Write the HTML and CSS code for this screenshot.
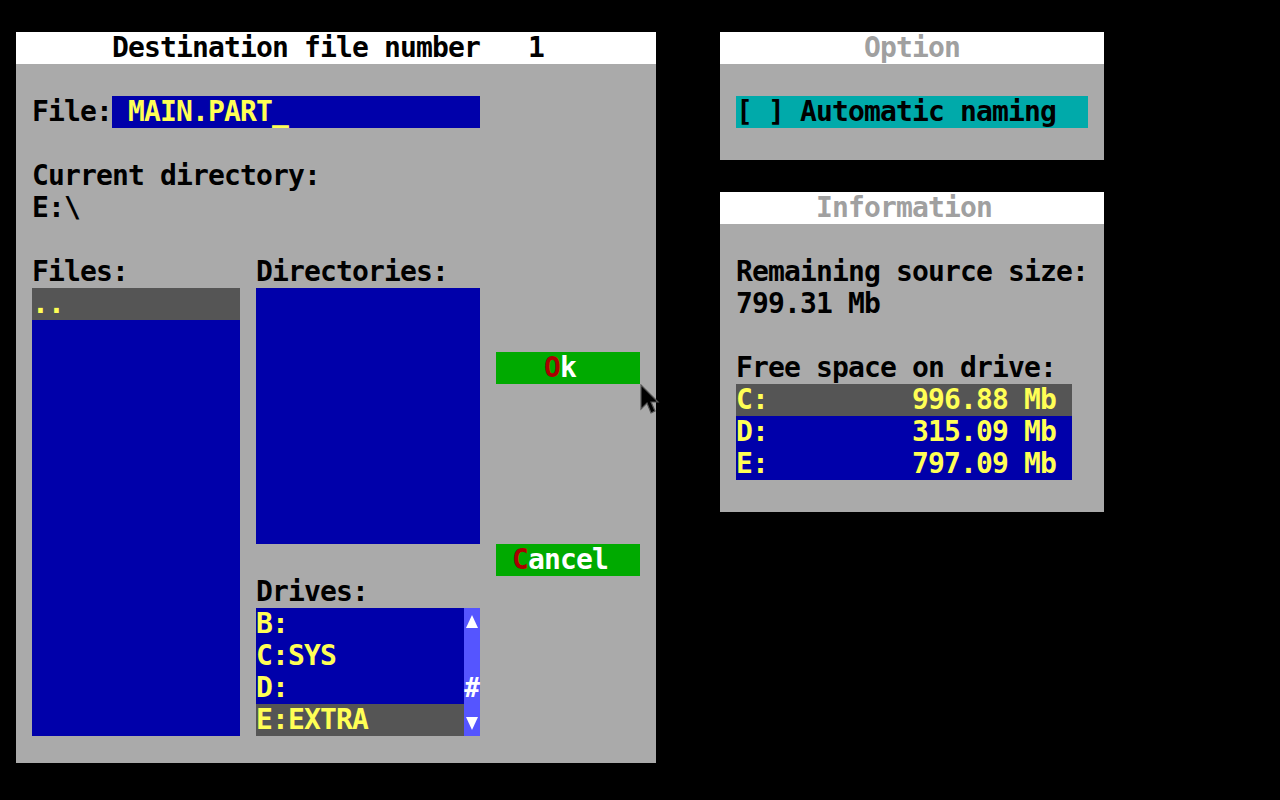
FILE: index.html
```html
<!DOCTYPE html>
<html lang="en">
<head>
<meta charset="utf-8">
<title>Destination file number</title>
<link rel="stylesheet" href="styles.css">
</head>
<body>
<div class="screen">
  <section class="dialog">
    <div class="win-title">Destination file number   1</div>
    <div class="dlg-body">
      <div class="file-row">
        <span class="label">File:</span>
        <span class="input">MAIN.PART_</span>
      </div>
      <div class="cur-dir">
        <div class="line">Current directory:</div>
        <div class="line">E:\</div>
      </div>
      <div class="lists">
        <div class="col col-files">
          <div class="line">Files:</div>
          <div class="listbox files-box">
            <div class="item sel">..</div>
          </div>
        </div>
        <div class="col col-dirs">
          <div class="line">Directories:</div>
          <div class="listbox dirs-box"></div>
          <div class="line drives-label">Drives:</div>
          <div class="drives">
            <div class="drive-items">
              <div class="item">B:</div>
              <div class="item">C:SYS</div>
              <div class="item">D:</div>
              <div class="item sel">E:EXTRA</div>
            </div>
            <div class="scrollbar">
              <span class="sb"><i class="tri up"></i></span>
              <span class="sb"></span>
              <span class="sb thumb">#</span>
              <span class="sb"><i class="tri down"></i></span>
            </div>
          </div>
        </div>
        <div class="col col-buttons">
          <div class="button ok"><span class="hot">O</span>k</div>
          <div class="button cancel"><span class="hot">C</span>ancel</div>
        </div>
      </div>
    </div>
  </section>

  <div class="side">
    <section class="panel option">
      <div class="win-title panel-title">Option</div>
      <div class="panel-body">
        <div class="checkbox">[ ] Automatic naming</div>
      </div>
    </section>
    <section class="panel info">
      <div class="win-title panel-title">Information</div>
      <div class="panel-body">
        <div class="line">Remaining source size:</div>
        <div class="line">799.31 Mb</div>
        <div class="line gap-top">Free space on drive:</div>
        <div class="drive-table">
          <div class="drow sel"><span>C:</span><span>996.88 Mb</span></div>
          <div class="drow"><span>D:</span><span>315.09 Mb</span></div>
          <div class="drow"><span>E:</span><span>797.09 Mb</span></div>
        </div>
      </div>
    </section>
  </div>

  <svg class="pointer" width="20" height="32" viewBox="0 0 20 32" aria-hidden="true">
    <path d="M1 1 L1 25 L7 19 L11 29 L15 27 L11 18 L18 18 Z" fill="#000" stroke="#555" stroke-width="1.2"/>
  </svg>
</div>
</body>
</html>
```

FILE: styles.css
```css
* { box-sizing: border-box; }

html, body {
  margin: 0;
  padding: 0;
  background: #000;
}

body {
  width: 1280px;
  height: 800px;
  overflow: hidden;
  font-family: "DejaVu Sans Mono", "Liberation Mono", monospace;
  font-weight: bold;
  font-size: 28px;
  letter-spacing: -0.856px;
  line-height: 32px;
  color: #000;
}

.screen {
  position: relative;
  display: flex;
  align-items: flex-start;
  gap: 64px;
  padding: 32px 0 0 16px;
  height: 800px;
}

.line {
  height: 32px;
  white-space: pre;
}

.win-title {
  height: 32px;
  background: #fff;
  white-space: pre;
}

/* ---------- main dialog ---------- */
.dialog {
  width: 640px;
  height: 731px;
  background: #aaaaaa;
  display: flex;
  flex-direction: column;
}

.dialog > .win-title {
  padding-left: 96px;
  color: #000;
}

.dlg-body {
  padding: 32px 16px 0;
  display: flex;
  flex-direction: column;
}

.file-row {
  display: flex;
  height: 32px;
}

.file-row .label {
  width: 80px;
}

.input {
  width: 368px;
  background: #0000aa;
  color: #ffff55;
  padding-left: 16px;
  white-space: pre;
}

.cur-dir {
  margin-top: 32px;
}

.lists {
  margin-top: 32px;
  display: flex;
  gap: 16px;
}

.col {
  display: flex;
  flex-direction: column;
}

.col-files { width: 208px; }
.col-dirs { width: 224px; }
.col-buttons { width: 144px; }

.listbox {
  background: #0000aa;
}

.files-box { height: 448px; }
.dirs-box { height: 256px; }

.item {
  height: 32px;
  color: #ffff55;
  white-space: pre;
}

.item.sel {
  background: #555555;
}

.drives-label {
  margin-top: 32px;
}

.drives {
  display: flex;
  height: 128px;
}

.drive-items {
  flex: 1;
  background: #0000aa;
}

.scrollbar {
  width: 16px;
  background: #5555ff;
  display: flex;
  flex-direction: column;
}

.sb {
  height: 32px;
  color: #fff;
  letter-spacing: 0;
  display: flex;
  align-items: center;
  justify-content: center;
}

.sb.thumb {
  font-size: 26px;
}

.tri {
  width: 0;
  height: 0;
  border-left: 6px solid transparent;
  border-right: 6px solid transparent;
}

.tri.up {
  border-bottom: 13px solid #fff;
  margin-top: -6px;
}

.tri.down {
  border-top: 13px solid #fff;
  margin-top: 6px;
}

.button {
  height: 32px;
  background: #00aa00;
  color: #fff;
  white-space: pre;
}

.button .hot {
  color: #aa0000;
}

.ok {
  margin-top: 96px;
  padding-left: 48px;
}

.cancel {
  margin-top: 160px;
  padding-left: 16px;
}

/* ---------- side panels ---------- */
.side {
  width: 384px;
  display: flex;
  flex-direction: column;
  gap: 32px;
}

.panel {
  background: #aaaaaa;
  display: flex;
  flex-direction: column;
}

.panel-title {
  color: #a0a0a0;
}

.option { height: 128px; }
.option .panel-title { padding-left: 144px; }

.info { height: 320px; }
.info .panel-title { padding-left: 96px; }

.panel-body {
  padding: 32px 16px 0;
}

.checkbox {
  width: 352px;
  height: 32px;
  background: #00aaaa;
  color: #000;
  white-space: pre;
}

.gap-top {
  margin-top: 32px;
}

.drive-table {
  width: 336px;
  background: #0000aa;
}

.drow {
  height: 32px;
  display: flex;
  justify-content: space-between;
  padding-right: 16px;
  color: #ffff55;
  white-space: pre;
}

.drow.sel {
  background: #555555;
}

/* mouse pointer overlay */
.pointer {
  position: absolute;
  left: 640px;
  top: 384px;
}
```
